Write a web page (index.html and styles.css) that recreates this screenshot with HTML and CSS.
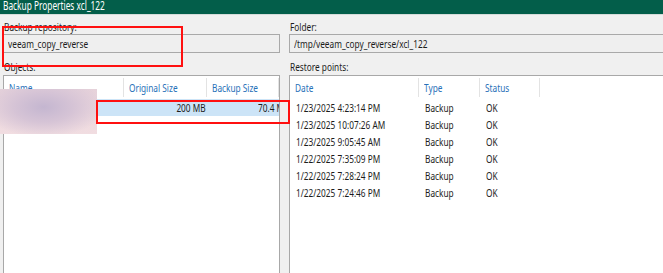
FILE: index.html
```html
<!DOCTYPE html>
<html lang="en">
<head>
    <meta charset="UTF-8">
    <title>Backup Properties xcl_122</title>
    <link rel="stylesheet" href="styles.css">
</head>
<body>
    <div class="window">
        <div class="titlebar"><span class="t">Backup Properties xcl_122</span></div>

        <div class="content">
            <div class="pane">
                <label class="field-label"><span class="t">Backup repository:</span></label>
                <div class="textbox"><span class="t">veeam_copy_reverse</span></div>
                <label class="field-label list-label"><span class="t">Objects:</span></label>
                <div class="list">
                    <div class="list-head objects-cols">
                        <span class="col"><span class="t">Name</span></span>
                        <span class="col"><span class="t">Original Size</span></span>
                        <span class="col"><span class="t">Backup Size</span></span>
                    </div>
                    <div class="list-row objects-cols selected">
                        <span class="cell"></span>
                        <span class="cell num"><span class="t t-right">200 MB</span></span>
                        <span class="cell cut"><span class="t">70.4 MB</span></span>
                    </div>
                </div>
            </div>

            <div class="pane">
                <label class="field-label"><span class="t">Folder:</span></label>
                <div class="textbox"><span class="t">/tmp/veeam_copy_reverse/xcl_122</span></div>
                <label class="field-label list-label"><span class="t">Restore points:</span></label>
                <div class="list">
                    <div class="list-head points-cols">
                        <span class="col"><span class="t">Date</span></span>
                        <span class="col"><span class="t">Type</span></span>
                        <span class="col"><span class="t">Status</span></span>
                        <span></span>
                    </div>
                    <div id="points"></div>
                </div>
            </div>
        </div>

        <!-- annotations drawn over the screenshot -->
        <div class="blur-patch"></div>
        <div class="mark mark-repo"></div>
        <div class="mark mark-object"></div>
    </div>

    <script>
        const points = [
            '1/23/2025 4:23:14 PM',
            '1/23/2025 10:07:26 AM',
            '1/23/2025 9:05:45 AM',
            '1/22/2025 7:35:09 PM',
            '1/22/2025 7:28:24 PM',
            '1/22/2025 7:24:46 PM'
        ];

        const box = document.getElementById('points');
        points.forEach(date => {
            box.innerHTML += `
                <div class="list-row points-cols">
                    <span class="cell"><span class="t">${date}</span></span>
                    <span class="cell"><span class="t">Backup</span></span>
                    <span class="cell"><span class="t">OK</span></span>
                    <span></span>
                </div>`;
        });
    </script>
</body>
</html>
```

FILE: styles.css
```css
body {
    margin: 0;
    font-family: 'Noto Sans', 'Open Sans', Arial, sans-serif;
    font-size: 11.5px;
    color: #1c1c1c;
    background: #f0f0f0;
    overflow: hidden;
}

/* the screenshot is squeezed sideways, so text is narrowed to match */
.t {
    display: inline-block;
    white-space: nowrap;
    transform: scaleX(0.72);
    transform-origin: 0 50%;
}

.t-right {
    transform-origin: 100% 50%;
}

.window {
    position: relative;
    width: 663px;
    height: 273px;
    overflow: hidden;
}

.titlebar {
    height: 14px;
    line-height: 10px;
    padding-left: 3px;
    background: #035e4a;
    color: #fff;
    font-size: 13px;
    border-bottom: 1px solid #d5dcda;
    overflow: hidden;
}

.titlebar .t {
    transform: scaleX(0.64);
}

.content {
    display: grid;
    grid-template-columns: 277px 390px;
    column-gap: 9px;
    padding-left: 3px;
}

.pane {
    display: flex;
    flex-direction: column;
}

.field-label {
    display: block;
    padding-top: 4px;
    padding-left: 1px;
    line-height: 15px;
    white-space: nowrap;
}

.list-label {
    padding-top: 6px;
    padding-bottom: 1px;
}

.textbox {
    height: 17px;
    line-height: 17px;
    padding-left: 4px;
    border: 1px solid #a9a9a9;
    background: #efefef;
    white-space: nowrap;
    overflow: hidden;
}

.list {
    height: 220px;
    background: #fff;
    border: 1px solid #a8a8a8;
    overflow: hidden;
}

.objects-cols {
    display: grid;
    grid-template-columns: 120px 83px 72px;
}

.points-cols {
    display: grid;
    grid-template-columns: 129px 61px 60px 1fr;
}

.list-head {
    height: 22px;
    align-items: center;
    color: #2770b8;
}

.list-head .col {
    height: 19px;
    line-height: 19px;
    padding-left: 5px;
    border-right: 1px solid #e3e3e3;
    white-space: nowrap;
    overflow: hidden;
}

.list-row {
    height: 17px;
    line-height: 17px;
    white-space: nowrap;
}

.list-row:first-of-type {
    margin-top: 1px;
}

.list-row .cell {
    padding-left: 6px;
    overflow: hidden;
}

.list-row .num {
    text-align: right;
    padding-right: 1px;
}

.list-row .cut {
    padding-left: 51px;
}

.selected {
    margin-top: 1px;
    background: #cce4f7;
}

.blur-patch {
    position: absolute;
    left: 0;
    top: 89px;
    width: 97px;
    height: 45px;
    background:
        radial-gradient(ellipse at 45% 40%, #c4b6d0 0%, #d6c4d6 40%, rgba(232, 212, 220, 0) 80%),
        linear-gradient(180deg, #e6d2da, #f1dde1);
}

.mark {
    position: absolute;
    border: 2px solid #ff1010;
}

.mark-repo {
    left: 2px;
    top: 26px;
    width: 177px;
    height: 37px;
}

.mark-object {
    left: 96px;
    top: 100px;
    width: 190px;
    height: 20px;
}
```
